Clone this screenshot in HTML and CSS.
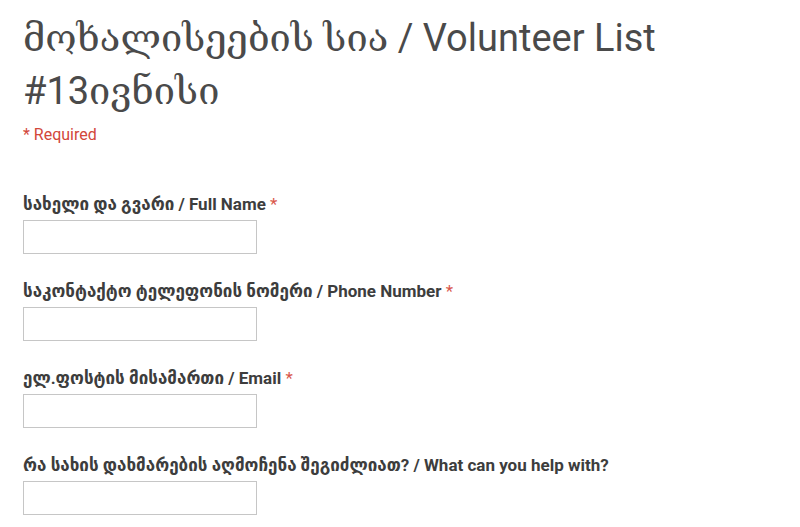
FILE: index.html
```html
<!DOCTYPE html>
<html lang="ka">

<head>
  <meta charset="UTF-8">
  <title>მოხალისეების სია / Volunteer List #13ივნისი</title>
  <link rel="stylesheet" href="styles.css">
</head>

<body>
  <form class="form">
    <header class="form-header">
      <h1 class="form-title">მოხალისეების სია / Volunteer List #13ივნისი</h1>
      <div class="required-note">* Required</div>
    </header>

    <div class="item">
      <label class="item-label" for="name">სახელი და გვარი / Full Name <span class="star">*</span></label>
      <input class="item-input" type="text" id="name">
    </div>

    <div class="item">
      <label class="item-label" for="phone">საკონტაქტო ტელეფონის ნომერი / Phone Number <span class="star">*</span></label>
      <input class="item-input" type="text" id="phone">
    </div>

    <div class="item">
      <label class="item-label" for="email">ელ.ფოსტის მისამართი / Email <span class="star">*</span></label>
      <input class="item-input" type="text" id="email">
    </div>

    <div class="item">
      <label class="item-label" for="help">რა სახის დახმარების აღმოჩენა შეგიძლიათ? / What can you help with?</label>
      <input class="item-input" type="text" id="help">
    </div>
  </form>
</body>

</html>
```

FILE: styles.css
```css
body {
  margin: 0;
  padding: 0;
  background: #fff;
  font-family: Roboto, "DejaVu Sans", sans-serif;
  color: #444;
}

.form {
  padding: 12px 0 0 23px;
  width: 680px;
}

.form-title {
  margin: 0;
  font-family: Roboto, "DejaVu Serif", serif;
  font-size: 38px;
  line-height: 53px;
  font-weight: 400;
  color: #4a4a4a;
}

.required-note {
  margin-top: 6px;
  font-size: 16px;
  line-height: 22px;
  color: #d2473a;
}

.form-header {
  margin-bottom: 48px;
}

.item {
  margin-bottom: 27px;
}

.item-label {
  display: block;
  font-size: 17px;
  line-height: 20px;
  font-weight: 700;
  color: #3d3d3d;
  margin-bottom: 6px;
}

.star {
  color: #d9574b;
  font-weight: 400;
}

.item-input {
  display: block;
  box-sizing: border-box;
  width: 234px;
  height: 34px;
  margin: 0;
  border: 1px solid #c6c6c6;
  border-radius: 0;
  padding: 4px 6px;
  font-size: 14px;
}
```
